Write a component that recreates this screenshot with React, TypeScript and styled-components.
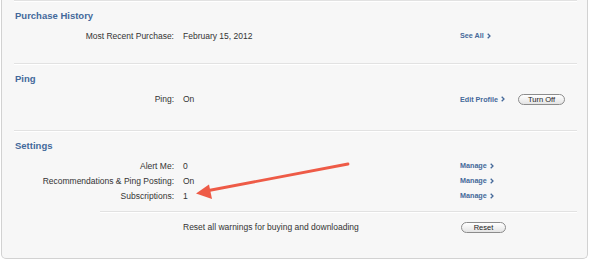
import React, { FC, ReactNode } from 'react';
import styled, { createGlobalStyle } from 'styled-components';

const GlobalStyle = createGlobalStyle`
  html, body {
    margin: 0;
    padding: 0;
    background: #ffffff;
  }
  body {
    font-family: "Liberation Sans", Arial, Helvetica, sans-serif;
    color: #333333;
    -webkit-font-smoothing: antialiased;
  }
`;

const Panel = styled.div`
  position: relative;
  margin-left: 1px;
  width: 587px;
  height: 259px;
  box-sizing: border-box;
  background: #f7f7f7;
  border: 1px solid #d2d2d2;
  border-top: none;
  border-radius: 0 0 5px 5px;
  padding: 0 10px 0 12px;
  overflow: hidden;
`;

const Section = styled.div<{ bottom: number }>`
  border-top: 1px solid #e2e2e2;
  box-shadow: inset 0 1px 0 #ffffff;
  padding: 9px 0 ${props => props.bottom}px;
`;

const Heading = styled.div`
  font-size: 9.5px;
  font-weight: bold;
  line-height: 12px;
  color: #43699b;
  margin: 0 0 6px 1px;
`;

const Row = styled.div<{ tall?: boolean }>`
  display: grid;
  grid-template-columns: 160px 268px auto;
  column-gap: 9px;
  align-items: center;
  min-height: ${props => props.tall ? 16 : 15}px;
  font-size: 8.5px;
`;

const Label = styled.div`
  text-align: right;
`;

const Value = styled.div``;

const Actions = styled.div`
  display: flex;
  align-items: center;
`;

const Link = styled.a`
  display: inline-flex;
  align-items: center;
  font-size: 7.2px;
  font-weight: bold;
  color: #45699a;
  text-decoration: none;
  cursor: pointer;

  > svg {
    margin-left: 3px;
  }
`;

const PillButton = styled.button<{ width: number; shift: number }>`
  width: ${props => props.width}px;
  height: 11px;
  margin-left: ${props => props.shift}px;
  padding: 0;
  border: 1px solid #8c8c8c;
  border-radius: 6px;
  background: linear-gradient(#ffffff, #e4e4e4);
  font-family: "Liberation Sans", Arial, sans-serif;
  font-size: 7.5px;
  line-height: 9px;
  color: #222222;
  cursor: pointer;
`;

const SubSection = styled.div`
  margin: 8px 0 0 86px;
  border-top: 1px solid #e2e2e2;
  box-shadow: inset 0 1px 0 #ffffff;
  padding-top: 7px;
`;

const ResetRow = styled(Row)`
  margin-left: -86px;
`;

const Arrow = styled.svg`
  position: absolute;
  left: 0;
  top: 0;
  pointer-events: none;
`;

const Chevron: FC = () => (
  <svg width="4" height="6" viewBox="0 0 4 6">
    <path d="M0.7 0.7 L3 3 L0.7 5.3" fill="none" stroke="#45699a" strokeWidth="1.3" />
  </svg>
);

const More: FC<{ children: ReactNode }> = ({ children }) => (
  <Link>
    {children}
    <Chevron />
  </Link>
);

export default function App() {
  return (
    <>
      <GlobalStyle />
      <Panel>
        <Section bottom={20}>
          <Heading>Purchase History</Heading>
          <Row>
            <Label>Most Recent Purchase:</Label>
            <Value>February 15, 2012</Value>
            <Actions><More>See All</More></Actions>
          </Row>
        </Section>

        <Section bottom={23}>
          <Heading>Ping</Heading>
          <Row tall>
            <Label>Ping:</Label>
            <Value>On</Value>
            <Actions>
              <More>Edit Profile</More>
              <PillButton width={47} shift={13}>Turn Off</PillButton>
            </Actions>
          </Row>
        </Section>

        <Section bottom={0}>
          <Heading>Settings</Heading>
          <Row>
            <Label>Alert Me:</Label>
            <Value>0</Value>
            <Actions><More>Manage</More></Actions>
          </Row>
          <Row>
            <Label>Recommendations &amp; Ping Posting:</Label>
            <Value>On</Value>
            <Actions><More>Manage</More></Actions>
          </Row>
          <Row>
            <Label>Subscriptions:</Label>
            <Value>1</Value>
            <Actions><More>Manage</More></Actions>
          </Row>
          <SubSection>
            <ResetRow tall>
              <Label />
              <Value>Reset all warnings for buying and downloading</Value>
              <Actions>
                <PillButton width={45} shift={1}>Reset</PillButton>
              </Actions>
            </ResetRow>
          </SubSection>
        </Section>

        <Arrow width="587" height="259" viewBox="0 0 587 259">
          <line x1="346" y1="164" x2="204" y2="191" stroke="#ee5b47" strokeWidth="2.8" strokeLinecap="round" />
          <polygon points="194,193.5 207,184.5 210,199" fill="#ee5b47" />
        </Arrow>
      </Panel>
    </>
  );
}
